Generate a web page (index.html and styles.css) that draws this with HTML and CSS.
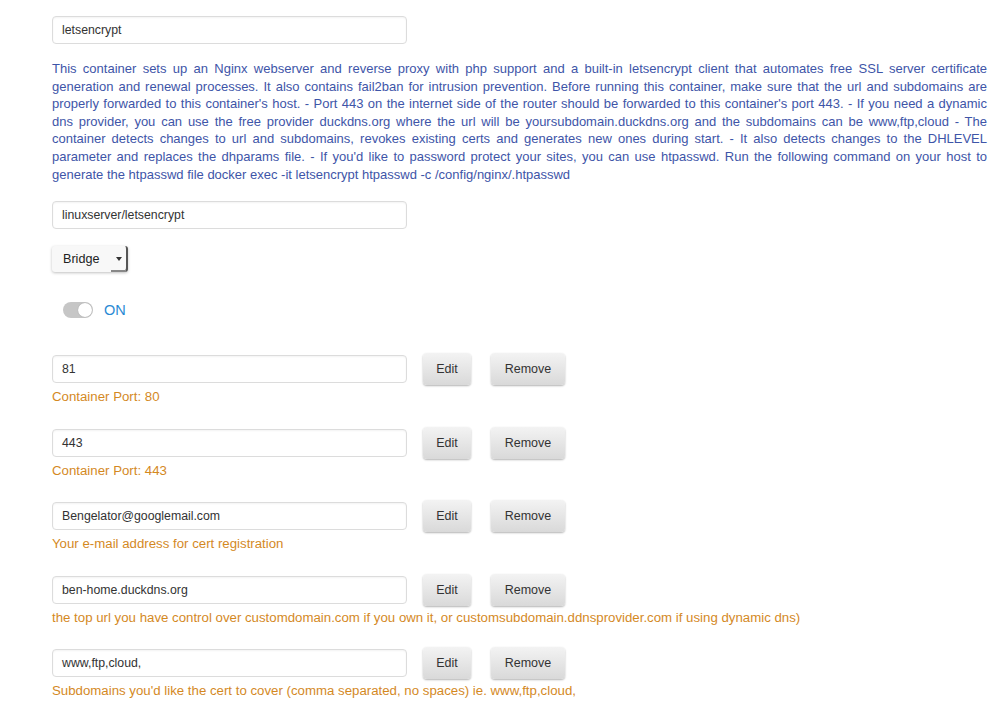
FILE: index.html
```html
<!DOCTYPE html>
<html lang="en">
<head>
    <meta charset="UTF-8">
    <meta name="viewport" content="width=device-width, initial-scale=1.0">
    <title>letsencrypt - Container</title>
    <link rel="stylesheet" href="styles.css">
</head>
<body>

<div class="container-form">
    <div class="text-field">letsencrypt</div>

    <p class="description">This container sets up an Nginx webserver and reverse proxy with php support and a built-in letsencrypt client that automates free SSL server certificate generation and renewal processes. It also contains fail2ban for intrusion prevention. Before running this container, make sure that the url and subdomains are properly forwarded to this container's host. - Port 443 on the internet side of the router should be forwarded to this container's port 443. - If you need a dynamic dns provider, you can use the free provider duckdns.org where the url will be yoursubdomain.duckdns.org and the subdomains can be www,ftp,cloud - The container detects changes to url and subdomains, revokes existing certs and generates new ones during start. - It also detects changes to the DHLEVEL parameter and replaces the dhparams file. - If you'd like to password protect your sites, you can use htpasswd. Run the following command on your host to generate the htpasswd file docker exec -it letsencrypt htpasswd -c /config/nginx/.htpasswd</p>

    <div class="text-field image-field">linuxserver/letsencrypt</div>

    <div class="dropdown">
        <span class="dropdown-label">Bridge</span>
        <span class="dropdown-caret"></span>
    </div>

    <div class="switch-row">
        <span class="switch"><span class="switch-knob"></span></span>
        <span class="switch-label">ON</span>
    </div>

    <div class="param-list">
        <div class="param">
            <div class="param-row">
                <div class="text-field">81</div>
                <button class="btn btn-edit">Edit</button>
                <button class="btn btn-remove">Remove</button>
            </div>
            <div class="param-help">Container Port: 80</div>
        </div>
        <div class="param">
            <div class="param-row">
                <div class="text-field">443</div>
                <button class="btn btn-edit">Edit</button>
                <button class="btn btn-remove">Remove</button>
            </div>
            <div class="param-help">Container Port: 443</div>
        </div>
        <div class="param">
            <div class="param-row">
                <div class="text-field">Bengelator@googlemail.com</div>
                <button class="btn btn-edit">Edit</button>
                <button class="btn btn-remove">Remove</button>
            </div>
            <div class="param-help">Your e-mail address for cert registration</div>
        </div>
        <div class="param">
            <div class="param-row">
                <div class="text-field">ben-home.duckdns.org</div>
                <button class="btn btn-edit">Edit</button>
                <button class="btn btn-remove">Remove</button>
            </div>
            <div class="param-help">the top url you have control over customdomain.com if you own it, or customsubdomain.ddnsprovider.com if using dynamic dns)</div>
        </div>
        <div class="param">
            <div class="param-row">
                <div class="text-field">www,ftp,cloud,</div>
                <button class="btn btn-edit">Edit</button>
                <button class="btn btn-remove">Remove</button>
            </div>
            <div class="param-help">Subdomains you'd like the cert to cover (comma separated, no spaces) ie. www,ftp,cloud,</div>
        </div>
    </div>
</div>

</body>
</html>
```

FILE: styles.css
```css
:root {
    --text-dark: #333333;
    --desc-blue: #3e55a8;
    --help-orange: #d4891f;
    --switch-blue: #2a8ad4;
    --field-border: #dcdcdc;
}

body {
    margin: 0;
    padding: 0;
    background-color: #ffffff;
    font-family: "Liberation Sans", Arial, sans-serif;
    font-size: 13px;
    color: var(--text-dark);
}

.container-form {
    padding: 16px 13px 0 52px;
}

.text-field {
    box-sizing: border-box;
    width: 355px;
    height: 28px;
    line-height: 26px;
    padding: 0 9px;
    border: 1px solid var(--field-border);
    border-radius: 4px;
    background-color: #ffffff;
    box-shadow: inset 0 1px 2px rgba(0, 0, 0, 0.05);
    font-size: 12.3px;
    color: var(--text-dark);
    white-space: nowrap;
    overflow: hidden;
}

.description {
    margin: 16px 0 18px 0;
    line-height: 17.6px;
    color: var(--desc-blue);
    text-align: justify;
}

.dropdown {
    display: flex;
    width: 76px;
    height: 26px;
    margin-top: 17px;
    border-radius: 3px;
    background-color: #f8f8f8;
    box-shadow: 0 1px 3px rgba(0, 0, 0, 0.25);
}

.dropdown-label {
    flex: 1;
    line-height: 26px;
    padding-left: 11px;
    font-size: 12.6px;
    color: #222222;
}

.dropdown-caret {
    width: 15px;
    position: relative;
    border-right: 2px solid #555555;
    border-radius: 0 3px 3px 0;
    box-shadow: inset 0 -2px 0 #888888;
}

/* small triangle of the select */
.dropdown-caret::after {
    content: "";
    position: absolute;
    left: 5px;
    top: 11px;
    border-left: 3px solid transparent;
    border-right: 3px solid transparent;
    border-top: 4px solid #333333;
}

.switch-row {
    display: flex;
    align-items: center;
    height: 20px;
    margin: 28px 0 0 11px;
}

.switch {
    display: flex;
    justify-content: flex-end;
    align-items: center;
    box-sizing: border-box;
    width: 30px;
    height: 16px;
    padding: 0 1px;
    border-radius: 8px;
    background-color: #c6c6c6;
}

.switch-knob {
    width: 14px;
    height: 14px;
    border-radius: 50%;
    background-color: #ffffff;
    box-shadow: 0 0 1px rgba(0, 0, 0, 0.3);
}

.switch-label {
    margin-left: 11px;
    font-size: 14.5px;
    color: var(--switch-blue);
}

.param-list {
    margin-top: 33px;
}

.param {
    margin-bottom: 21.5px;
}

.param-row {
    display: flex;
    align-items: center;
    height: 32px;
}

.btn {
    height: 32px;
    border: none;
    border-radius: 4px;
    background: linear-gradient(#f3f3f3, #d9d9d9);
    box-shadow: 0 1px 2px rgba(0, 0, 0, 0.3);
    font-family: "Liberation Sans", Arial, sans-serif;
    font-size: 12.5px;
    color: var(--text-dark);
    cursor: pointer;
    padding: 0;
}

.btn-edit {
    width: 48px;
    margin-left: 16px;
}

.btn-remove {
    width: 74px;
    margin-left: 20px;
}

.param-help {
    margin-top: 3px;
    line-height: 17px;
    font-size: 13.25px;
    color: var(--help-orange);
}
```
